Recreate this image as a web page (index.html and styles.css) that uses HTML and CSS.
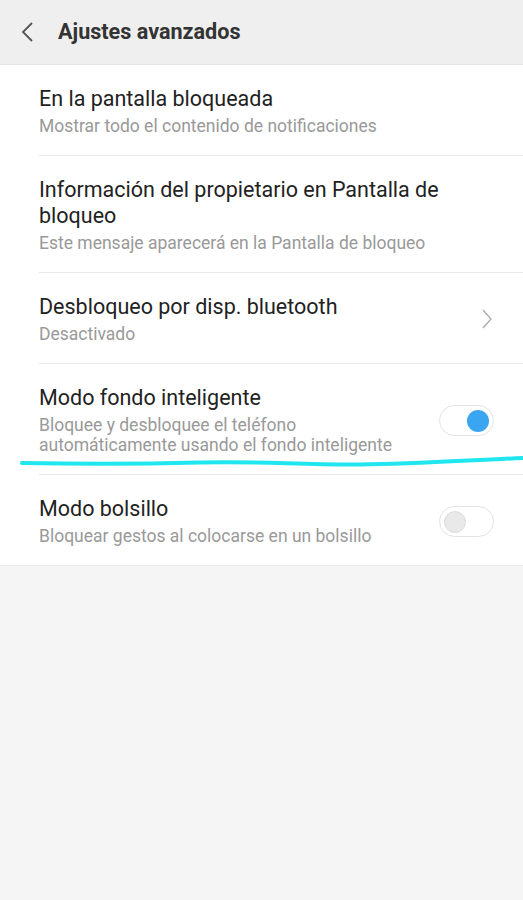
FILE: index.html
```html
<!DOCTYPE html>
<html lang="es">
<head>
    <meta charset="UTF-8">
    <meta name="viewport" content="width=device-width, initial-scale=1.0">
    <title>Ajustes avanzados</title>
    <link rel="stylesheet" href="styles.css">
</head>
<body>

    <div class="header">
        <svg class="back" width="16" height="22" viewBox="0 0 16 22">
            <path d="M12 2 L3 11 L12 20" fill="none" stroke="#555" stroke-width="1.8"/>
        </svg>
        <h1>Ajustes avanzados</h1>
    </div>

    <div class="list">
        <div class="item">
            <div class="text">
                <div class="title">En la pantalla bloqueada</div>
                <div class="sub">Mostrar todo el contenido de notificaciones</div>
            </div>
        </div>
        <div class="item">
            <div class="text">
                <div class="title">Información del propietario en Pantalla de bloqueo</div>
                <div class="sub">Este mensaje aparecerá en la Pantalla de bloqueo</div>
            </div>
        </div>
        <div class="item">
            <div class="text">
                <div class="title">Desbloqueo por disp. bluetooth</div>
                <div class="sub">Desactivado</div>
            </div>
            <svg class="arrow" width="12" height="20" viewBox="0 0 12 20">
                <path d="M2 1 L10 10 L2 19" fill="none" stroke="#aaa" stroke-width="1.3"/>
            </svg>
        </div>
        <div class="item">
            <div class="text">
                <div class="title">Modo fondo inteligente</div>
                <div class="sub narrow">Bloquee y desbloquee el teléfono automáticamente usando el fondo inteligente</div>
            </div>
            <div class="toggle on"><span class="knob"></span></div>
        </div>
        <div class="item">
            <div class="text">
                <div class="title">Modo bolsillo</div>
                <div class="sub">Bloquear gestos al colocarse en un bolsillo</div>
            </div>
            <div class="toggle"><span class="knob"></span></div>
        </div>
    </div>

    <!-- trazo a mano -->
    <svg class="scribble" width="523" height="20" viewBox="0 0 523 20">
        <path d="M22 9 C80 10, 140 10, 200 8.5 C260 7, 300 11, 360 10.5 C420 10, 470 6, 523 4" fill="none" stroke="#1fe6ef" stroke-width="4" stroke-linecap="round"/>
    </svg>

</body>
</html>
```

FILE: styles.css
```css
* {
    margin: 0;
    padding: 0;
    box-sizing: border-box;
    font-family: Roboto, 'Noto Sans', sans-serif;
}
body {
    background: #f5f5f5;
    width: 523px;
    height: 900px;
    position: relative;
    overflow: hidden;
}
/* Header */
.header {
    height: 65px;
    background: #efefef;
    display: flex;
    align-items: center;
    padding-left: 20px;
    border-bottom: 1px solid #e6e6e6;
}
.back {
    margin-right: 22px;
    margin-top: -1px;
}
.header h1 {
    font-size: 21.6px;
    font-weight: bold;
    color: #333;
    margin-top: -2px;
}
/* Lista */
.list {
    background: white;
    border-bottom: 1px solid #ebebeb;
}
.item {
    margin-left: 39px;
    padding: 21px 29px 19px 0;
    display: flex;
    align-items: center;
    border-bottom: 1px solid #e8e8e8;
}
.item:last-child {
    border-bottom: none;
}
.text {
    flex: 1;
}
.title {
    font-size: 21.5px;
    line-height: 26px;
    color: #222;
    padding-right: 20px;
}
.sub {
    font-size: 17.5px;
    line-height: 20px;
    color: #999;
    margin-top: 4px;
}
.sub.narrow {
    max-width: 370px;
}
.arrow {
    margin-right: 1px;
}
/* Switch */
.toggle {
    width: 55px;
    height: 31px;
    border: 1px solid #e3e3e3;
    border-radius: 16px;
    background: white;
    position: relative;
}
.knob {
    position: absolute;
    top: 4px;
    left: 4px;
    width: 22px;
    height: 22px;
    border-radius: 50%;
    background: #e9e9e9;
    border: 1px solid #dcdcdc;
}
.toggle.on .knob {
    left: auto;
    right: 4px;
    background: #3aa6f2;
    border: none;
}
.scribble {
    position: absolute;
    left: 0;
    top: 454px;
}
```
